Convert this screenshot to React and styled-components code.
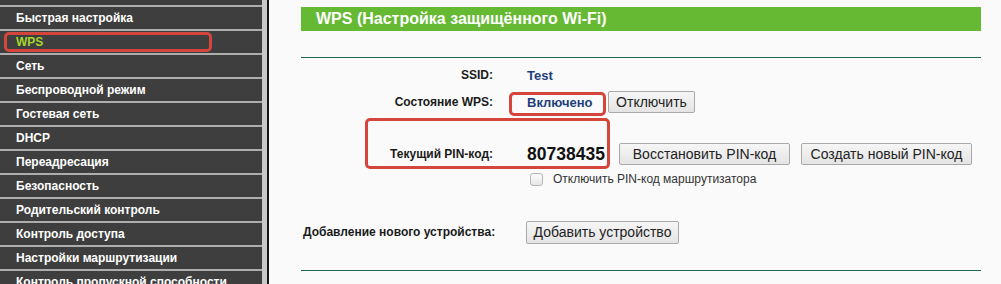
import React from "react";
import styled, { createGlobalStyle } from "styled-components";

const Global = createGlobalStyle`
  html, body {
    margin: 0;
    padding: 0;
    background: #fafafa;
    font-family: "Liberation Sans", Arial, sans-serif;
  }
`;

const Page = styled.div`
  display: flex;
  width: 1001px;
  height: 284px;
  overflow: hidden;
  background: #fafafa;
`;

const SideWrap = styled.div`
  flex: none;
  border-right: 2px solid #151515;
`;

const Sidebar = styled.ul`
  list-style: none;
  margin: 0;
  padding: 5px 0 0;
  width: 267px;
  height: 100%;
  box-sizing: border-box;
  background: #3e3e3e;
  border-right: 5px solid #c9c9c9;
  position: relative;
`;

const MenuItem = styled.li`
  height: 22px;
  line-height: 22px;
  border-top: 2px solid #adadad;
  padding-left: 16px;
  font-size: 12px;
  font-weight: bold;
  color: ${(p) => (p.$active ? "#a6d42e" : "#ffffff")};
  white-space: nowrap;
`;

const Mark = styled.div`
  position: absolute;
  border: 3px solid #d4453b;
  border-radius: 5px;
  box-sizing: border-box;
  pointer-events: none;
`;

const Main = styled.div`
  flex: none;
  width: 680px;
  margin-left: 32px;
  padding-top: 7px;
  position: relative;
`;

const TitleBar = styled.div`
  height: 24px;
  line-height: 24px;
  background: #66b933;
  color: #fff;
  font-size: 16px;
  font-weight: bold;
  padding-left: 15px;
`;

const Rule = styled.div`
  height: 1px;
  background: #1d6a53;
  margin-top: ${(p) => p.$top}px;
`;

const Row = styled.div`
  display: flex;
  align-items: center;
  height: ${(p) => p.$h || 24}px;
  margin-top: ${(p) => p.$top}px;
`;

const Label = styled.div`
  width: 192px;
  flex: none;
  text-align: ${(p) => (p.$left ? "left" : "right")};
  padding-left: ${(p) => (p.$left ? "2px" : "0")};
  box-sizing: border-box;
  font-size: 12px;
  font-weight: bold;
  color: #1a1a1a;
  white-space: nowrap;
`;

const Field = styled.div`
  display: flex;
  align-items: center;
  margin-left: ${(p) => p.$indent ?? 33}px;
`;

const Value = styled.span`
  font-size: 13px;
  font-weight: bold;
  color: #1f3f7c;
  width: ${(p) => p.$w || "auto"};
  display: inline-block;
  padding-left: 1px;
`;

const Pin = styled.span`
  font-size: 17.5px;
  font-weight: bold;
  color: #111;
  width: 92px;
  display: inline-block;
  padding-left: 1px;
`;

const Button = styled.button`
  height: ${(p) => p.$h || 22}px;
  width: ${(p) => p.$w}px;
  margin-left: ${(p) => p.$ml || 0}px;
  padding: 0;
  font-family: "Liberation Sans", Arial, sans-serif;
  font-size: 14px;
  color: #222;
  background: linear-gradient(#f6f6f6, #e4e4e4);
  border: 1px solid #a9a9a9;
  border-radius: 2px;
`;

const Check = styled.span`
  width: 11px;
  height: 11px;
  border: 1px solid #b5b5b5;
  border-radius: 3px;
  background: linear-gradient(#fdfdfd, #e6e6e6);
  display: inline-block;
`;

const CheckText = styled.span`
  font-size: 12px;
  color: #333;
  margin-left: 10px;
`;

const menu = [
  "Быстрая настройка",
  "WPS",
  "Сеть",
  "Беспроводной режим",
  "Гостевая сеть",
  "DHCP",
  "Переадресация",
  "Безопасность",
  "Родительский контроль",
  "Контроль доступа",
  "Настройки маршрутизации",
  "Контроль пропускной способности",
];

export default function App() {
  return (
    <Page>
      <Global />
      <SideWrap>
        <Sidebar>
          {menu.map((m) => (
            <MenuItem key={m} $active={m === "WPS"}>
              {m}
            </MenuItem>
          ))}
          <Mark style={{ left: 4, top: 32, width: 208, height: 20 }} />
        </Sidebar>
      </SideWrap>
      <Main>
        <TitleBar>WPS (Настройка защищённого Wi-Fi)</TitleBar>
        <Rule $top={26} />
        <Row $top={6} $h={22}>
          <Label>SSID:</Label>
          <Field>
            <Value>Test</Value>
          </Field>
        </Row>
        <Row $top={4}>
          <Label>Состояние WPS:</Label>
          <Field>
            <Value $w="81px">Включено</Value>
            <Button $w={87}>Отключить</Button>
          </Field>
        </Row>
        <Row $top={28}>
          <Label>Текущий PIN-код:</Label>
          <Field>
            <Pin>80738435</Pin>
            <Button $w={171}>Восстановить PIN-код</Button>
            <Button $w={171} $ml={11}>
              Создать новый PIN-код
            </Button>
          </Field>
        </Row>
        <Row $top={4} $h={18}>
          <Label />
          <Field $indent={37}>
            <Check />
            <CheckText>Отключить PIN-код маршрутизатора</CheckText>
          </Field>
        </Row>
        <Row $top={32}>
          <Label $left>Добавление нового устройства:</Label>
          <Field>
            <Button $w={153} $h={23}>Добавить устройство</Button>
          </Field>
        </Row>
        <Rule $top={26} />
        <Mark style={{ left: 208, top: 92, width: 97, height: 24 }} />
        <Mark style={{ left: 64, top: 118, width: 245, height: 51 }} />
      </Main>
    </Page>
  );
}
